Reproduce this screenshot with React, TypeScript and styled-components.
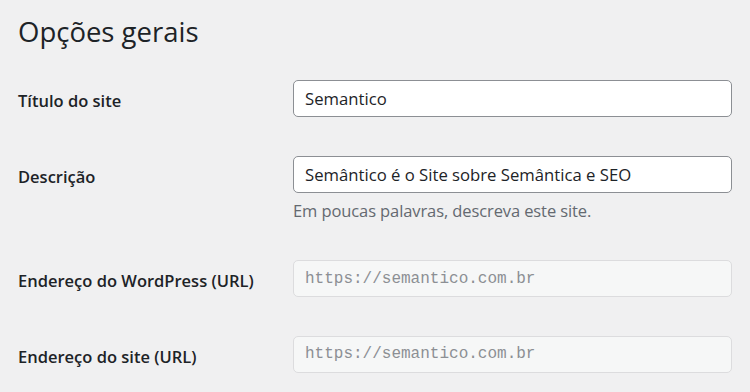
import React from "react";
import styled, { createGlobalStyle } from "styled-components";

const Colors = {
  PAGE_BG: "#f0f0f1",
  TEXT: "#1d2327",
  MUTED: "#646970",
  INPUT_BORDER: "#8c8f94",
  READONLY_BG: "#f6f7f7",
  READONLY_BORDER: "#dcdcde",
  READONLY_TEXT: "#8c8f94",
};

const GlobalStyle = createGlobalStyle`
  html, body {
    margin: 0;
    padding: 0;
    background: ${Colors.PAGE_BG};
  }
  body {
    font-family: "Open Sans", "Noto Sans", sans-serif;
    color: ${Colors.TEXT};
  }
`;

const Wrap = styled.div`
  width: 750px;
  height: 392px;
  overflow: hidden;
  box-sizing: border-box;
  padding: 14px 0 0 18px;
`;

const Heading = styled.h1`
  margin: 0 0 11px;
  font-size: 27.5px;
  font-weight: 400;
  line-height: 36px;
`;

const FormTable = styled.div`
  display: flex;
  flex-direction: column;
`;

const Row = styled.div`
  display: grid;
  grid-template-columns: 275px 439px;
  padding: 19px 0 19.5px;
`;

const Label = styled.label`
  padding-top: 10px;
  font-size: 16.5px;
  font-weight: 600;
  line-height: 22px;
`;

const Field = styled.div`
  display: flex;
  flex-direction: column;
`;

const TextInput = styled.input<{ $readOnly?: boolean }>`
  box-sizing: border-box;
  width: 439px;
  height: 37px;
  margin: 0;
  padding: 0 11px;
  border: 1px solid
    ${(p) => (p.$readOnly ? Colors.READONLY_BORDER : Colors.INPUT_BORDER)};
  border-radius: 5px;
  background: ${(p) => (p.$readOnly ? Colors.READONLY_BG : "#fff")};
  color: ${(p) => (p.$readOnly ? Colors.READONLY_TEXT : Colors.TEXT)};
  font-family: ${(p) =>
    p.$readOnly
      ? `"Liberation Mono", "DejaVu Sans Mono", monospace`
      : `"Open Sans", "Noto Sans", sans-serif`};
  font-size: ${(p) => (p.$readOnly ? "16px" : "16.7px")};
  outline: none;
`;

const Description = styled.p`
  margin: 7px 0 0;
  color: ${Colors.MUTED};
  font-size: 16.5px;
  line-height: 22px;
  letter-spacing: -0.1px;
`;

type FieldRow = {
  id: string;
  label: string;
  value: string;
  description?: string;
  readOnly?: boolean;
};

const ROWS: FieldRow[] = [
  { id: "blogname", label: "Título do site", value: "Semantico" },
  {
    id: "blogdescription",
    label: "Descrição",
    value: "Semântico é o Site sobre Semântica e SEO",
    description: "Em poucas palavras, descreva este site.",
  },
  {
    id: "siteurl",
    label: "Endereço do WordPress (URL)",
    value: "https://semantico.com.br",
    readOnly: true,
  },
  {
    id: "home",
    label: "Endereço do site (URL)",
    value: "https://semantico.com.br",
    readOnly: true,
  },
];

function App() {
  return (
    <>
      <GlobalStyle />
      <Wrap>
        <Heading>Opções gerais</Heading>
        <FormTable>
          {ROWS.map((row) => (
            <Row key={row.id}>
              <Label htmlFor={row.id}>{row.label}</Label>
              <Field>
                <TextInput
                  $readOnly={row.readOnly}
                  defaultValue={row.value}
                  disabled={row.readOnly}
                  id={row.id}
                  type="text"
                />
                {row.description && (
                  <Description>{row.description}</Description>
                )}
              </Field>
            </Row>
          ))}
        </FormTable>
      </Wrap>
    </>
  );
}

export default App;
